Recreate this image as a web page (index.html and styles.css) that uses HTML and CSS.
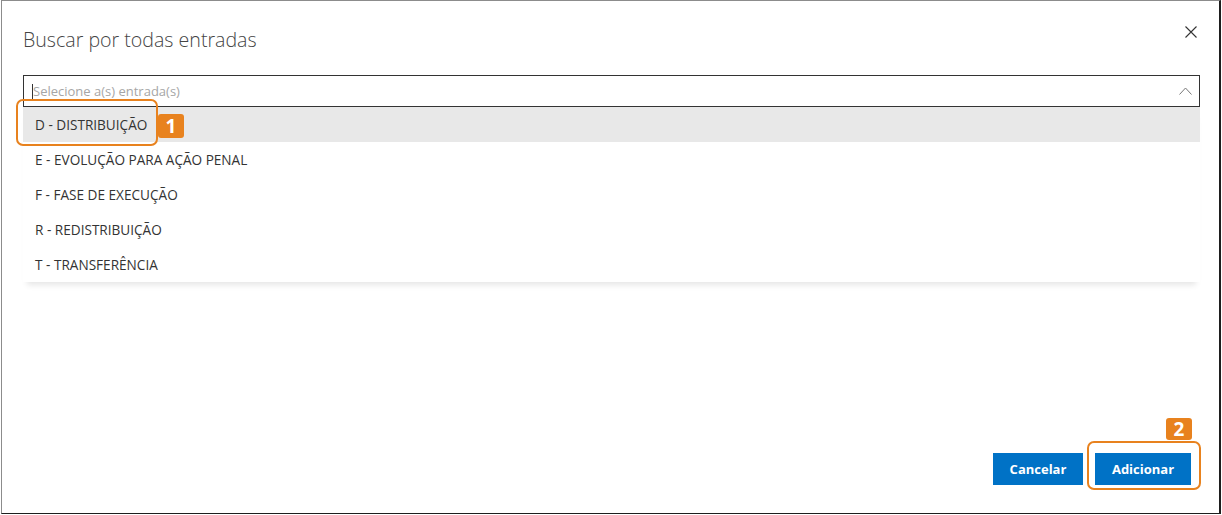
FILE: index.html
```html
<!DOCTYPE html>
<html>
<head>
  <meta charset="utf-8">
  <title>Buscar por todas entradas</title>
  <link rel="stylesheet" href="styles.css">
</head>
<body>
  <div class="frame">
    <div class="dialog">
      <header class="head">
        <h1 class="title">Buscar por todas entradas</h1>
        <button class="close" aria-label="Fechar">
          <svg width="12" height="12" viewBox="0 0 12 12">
            <path d="M0.5 0.5 L11.5 11.5 M11.5 0.5 L0.5 11.5" stroke="#333" stroke-width="1.1" fill="none"/>
          </svg>
        </button>
      </header>

      <div class="picker">
        <div class="field">
          <span class="caret"></span>
          <span class="placeholder">Selecione a(s) entrada(s)</span>
          <svg class="chevron" width="13" height="8" viewBox="0 0 13 8">
            <path d="M0.5 7.5 L6.5 1 L12.5 7.5" stroke="#777" stroke-width="1" fill="none"/>
          </svg>
        </div>
        <ul class="options">
          <li class="option active">D - DISTRIBUIÇÃO</li>
          <li class="option">E - EVOLUÇÃO PARA AÇÃO PENAL</li>
          <li class="option">F - FASE DE EXECUÇÃO</li>
          <li class="option">R - REDISTRIBUIÇÃO</li>
          <li class="option">T - TRANSFERÊNCIA</li>
        </ul>
        <!-- tutorial markers -->
        <span class="mark mark-one"></span>
        <span class="badge badge-one">1</span>
      </div>

      <footer class="foot">
        <button class="btn">Cancelar</button>
        <div class="marked">
          <button class="btn btn-add">Adicionar</button>
          <span class="mark mark-two"></span>
          <span class="badge badge-two">2</span>
        </div>
      </footer>
    </div>
  </div>
</body>
</html>
```

FILE: styles.css
```css
html, body {
  margin: 0;
  height: 100%;
}
body {
  background: #fff;
  font-family: "Open Sans", "Noto Sans", sans-serif;
  color: #333;
  overflow: hidden;
}
.frame {
  box-sizing: border-box;
  width: 1220px;
  height: 514px;
  margin-left: 1px;
  border-top: 1px solid #8c8c8c;
  border-left: 1px solid #8c8c8c;
  border-right: 2px solid #1e1e1e;
  border-bottom: 1px solid #1e1e1e;
}
.dialog {
  height: 100%;
  display: flex;
  flex-direction: column;
}
.head {
  display: flex;
  justify-content: space-between;
  align-items: flex-start;
  padding: 24px 22px 0 21px;
  height: 50px;
}
.title {
  margin: 0;
  font-weight: 300;
  font-size: 19.6px;
  line-height: 30px;
  color: #444;
}
.close {
  border: 0;
  background: none;
  padding: 0;
  margin-top: 1px;
  width: 12px;
  height: 12px;
  display: flex;
}

.picker {
  position: relative;
  margin: 0 19px 0 21px;
}
.field {
  box-sizing: border-box;
  height: 32px;
  border: 1px solid #333;
  display: flex;
  align-items: center;
  padding: 0 7px 0 8px;
}
.caret {
  width: 1px;
  height: 15px;
  background: #333;
}
.placeholder {
  flex: 1;
  font-size: 13px;
  color: #a6a6a6;
}
.chevron {
  display: block;
}
.options {
  list-style: none;
  margin: 0;
  padding: 0;
  box-shadow: 0 7px 6px -4px rgba(0, 0, 0, 0.1);
}
.option {
  height: 35px;
  line-height: 35px;
  padding-left: 12px;
  font-size: 13.6px;
  color: #333;
}
.option.active {
  background: #e8e8e8;
}

.foot {
  margin-top: auto;
  display: flex;
  justify-content: flex-end;
  gap: 12px;
  padding: 0 28px 28px 0;
}
.btn {
  height: 32px;
  width: 90px;
  border: 0;
  background: #0072c6;
  color: #fff;
  font-family: "Open Sans", "Noto Sans", sans-serif;
  font-weight: 700;
  font-size: 13px;
  padding: 0;
}
.btn-add {
  width: 96px;
}
.marked {
  position: relative;
  display: flex;
}

.mark {
  position: absolute;
  border: 2px solid #e8821e;
  border-radius: 7px;
}
.mark-one {
  left: -7px;
  top: 24px;
  width: 138px;
  height: 43px;
}
.mark-two {
  left: -8px;
  top: -12px;
  width: 110px;
  height: 45px;
}
.badge {
  position: absolute;
  width: 26px;
  height: 24px;
  border-radius: 3px;
  background: #e8821e;
  color: #fff;
  font-family: "Noto Sans", sans-serif;
  font-weight: 700;
  font-size: 19px;
  line-height: 24px;
  text-align: center;
}
.badge-one {
  left: 135px;
  top: 39px;
}
.badge-two {
  left: 71px;
  top: -35px;
  height: 22px;
  line-height: 22px;
}
```
